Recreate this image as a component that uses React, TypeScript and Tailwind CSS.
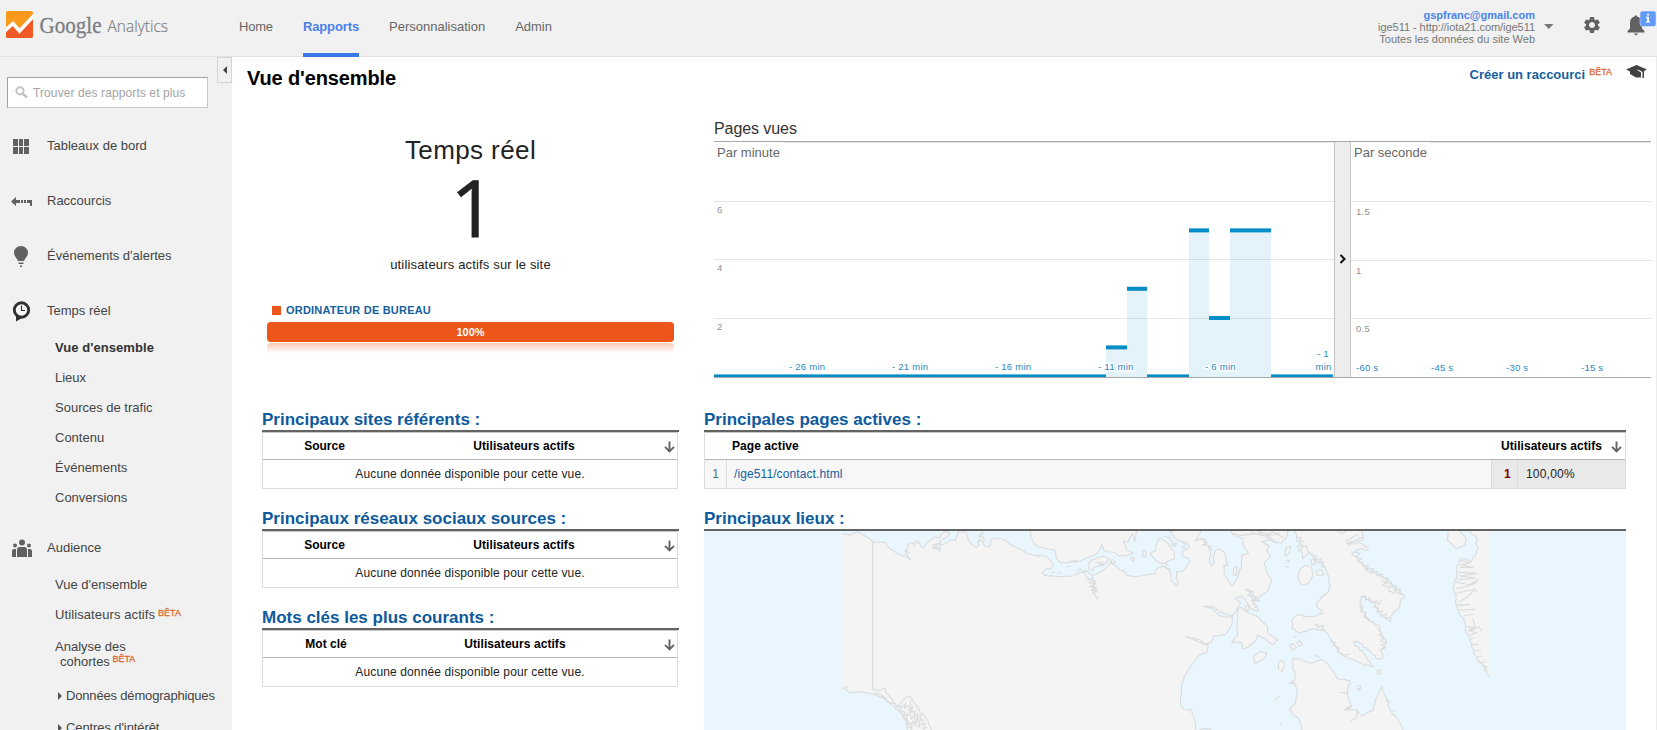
import { MdSettings } from "react-icons/md";
import type { ReactNode } from "react";

/* ---------- Header ---------- */

function Logo() {
  return (
    <svg width="180" height="56" viewBox="0 0 180 56" className="shrink-0">
      <defs>
        <clipPath id="logo-tile">
          <rect x="6" y="11" width="27" height="27" rx="2" />
        </clipPath>
        <linearGradient id="logo-top" x1="0" y1="0" x2="0" y2="1">
          <stop offset="0" stopColor="#f8981d" />
          <stop offset="1" stopColor="#f9a01f" />
        </linearGradient>
      </defs>
      <g clipPath="url(#logo-tile)">
        <rect x="6" y="11" width="27" height="27" fill="url(#logo-top)" />
        <path d="M6 29 13 22.5 19.5 29.5 34 13V38H6Z" fill="#f15a24" />
        <path d="M4 31.5 13 23.5 19.5 31 35 14.5" fill="none" stroke="#fff" strokeWidth="3.6" />
      </g>
      <text x="39.500" y="32.500" textLength="62" lengthAdjust="spacingAndGlyphs" fill="#7b7e82" stroke="#7b7e82" strokeWidth="0.3" fontSize="23.500" fontFamily="'Liberation Serif', serif">
        Google
      </text>
      <text x="107.500" y="32.200" textLength="60.500" lengthAdjust="spacingAndGlyphs" fill="#7d8084" stroke="#7d8084" strokeWidth="0.2" fontSize="17" fontWeight="300" fontFamily="'Open Sans', sans-serif">
        Analytics
      </text>
    </svg>
  );
}

function Header() {
  return (
    <header className="flex h-[57px] shrink-0 border-b border-[#e2e2e2] bg-[#f1f1f1] text-[13px]">
      <Logo />
      <nav className="ml-[59px] flex gap-[30px] text-[#666]">
        <a className="h-[57px] leading-[54px] tracking-[-0.2px]">Home</a>
        <a className="h-[57px] border-b-4 border-[#3b78e7] font-bold leading-[54px] tracking-[-0.12px] text-[#4a80ea]">Rapports</a>
        <a className="h-[57px] leading-[54px]">Personnalisation</a>
        <a className="h-[57px] leading-[54px]">Admin</a>
      </nav>
      <div className="ml-auto flex">
        <div className="pt-[9px] text-right text-[11px] leading-[12px] text-[#777]">
          <div className="font-bold text-[#4a84e8]">gspfranc@gmail.com</div>
          <div className="tracking-[-0.05px]">ige511 - http://iota21.com/ige511</div>
          <div>Toutes les données du site Web</div>
        </div>
        <svg width="10" height="6" viewBox="0 0 10 6" className="ml-[9px] mt-6">
          <path d="M0 0H9.500L4.750 5Z" fill="#777" />
        </svg>
        <MdSettings className="ml-[28px] mt-[15px] size-[20px] text-[#616161]" />
        <svg width="30" height="30" viewBox="0 0 30 30" className="ml-[25px] mt-[9px]">
          <path d="M0.500 23.500V22L3 19.500V13.500C3 10 5 8 7.500 7.500V7Q8.700 5.500 10 7V7.500C13 8 15 10 15 13.500V19.500L17.500 22V23.500ZM6.500 24.500H11.500L9 26.500Z" fill="#616161" />
          <rect x="13" y="2" width="16" height="15.500" rx="2.500" fill="#639bf8" stroke="#f1f1f1" strokeWidth="0.500" />
          <path d="M19 7.700H22V12.300H23V13.500H19V12.300H20V8.900H19ZM20 4.800H22V6.600H20Z" fill="#fff" />
        </svg>
      </div>
    </header>
  );
}

/* ---------- Sidebar ---------- */

const GridIcon = () => (
  <svg width="24" height="24" viewBox="0 0 24 24" fill="#616161">
    <path d="M4 4H9V11H4ZM10 4H14V11H10ZM15 4H20V11H15ZM4 12H9V19H4ZM10 12H14V19H10ZM15 12H20V19H15Z" />
  </svg>
);

const ShortcutIcon = () => (
  <svg width="24" height="24" viewBox="0 0 24 24" fill="#616161">
    <path d="M2 11.500 7 7V10H11V13H7V16ZM12 10H14V13H12ZM15 10H17V13H15ZM18 10H23V16H21V13H18Z" />
  </svg>
);

const BulbIcon = () => (
  <svg width="24" height="24" viewBox="0 0 24 24" fill="#616161">
    <path d="M12 1C16 1 19 4 19 7.700C19 11.500 16 13 15 16H9C8 13 5 11.500 5 7.700C5 4 8 1 12 1ZM9.500 17.500H14.500V19H9.500ZM11 20.500H13V22H11Z" />
  </svg>
);

const ClockIcon = () => (
  <svg width="24" height="24" viewBox="0 0 24 24">
    <circle cx="12.500" cy="10" r="7.200" fill="#f7f7f7" stroke="#303030" strokeWidth="2.900" />
    <path d="M7 15.500 7 21.500 13 18Z" fill="#303030" />
    <path d="M12.500 5.500V10.500H16" fill="none" stroke="#303030" strokeWidth="1.200" />
  </svg>
);

const PeopleIcon = () => (
  <svg width="24" height="24" viewBox="0 0 24 24" fill="#616161">
    <circle cx="13" cy="5.500" r="3" />
    <circle cx="6" cy="8.500" r="2" />
    <circle cx="20" cy="8.500" r="2" />
    <path d="M8 20V12.500Q8 10 10.500 10H15.500Q18 10 18 12.500V20ZM3 20V14Q3 12 5 12H7V20ZM19 20V12H21Q23 12 23 14V20Z" />
  </svg>
);

function NavItem({ icon, label, className = "" }: { icon: ReactNode; label: string; className?: string }) {
  return (
    <div className={`flex h-[55px] shrink-0 items-start pl-[9px] leading-[55px] ${className}`}>
      <span className="mt-[17px] w-[38px]">{icon}</span>
      {label}
    </div>
  );
}

const Beta = ({ className = "" }: { className?: string }) => (
  <span className={`relative text-[9px] leading-none text-[#dd6a2f] [-webkit-text-stroke:0.3px_#dd6a2f] ${className}`}>BÊTA</span>
);

function SubItem({ children, className = "" }: { children: ReactNode; className?: string }) {
  return <div className={`h-[30px] shrink-0 pl-[55px] leading-[30px] ${className}`}>{children}</div>;
}

const Caret = () => (
  <svg width="4" height="8" viewBox="0 0 4 8" className="mr-1">
    <path d="M0 0 4 4 0 8Z" fill="#555" />
  </svg>
);

function Sidebar() {
  return (
    <aside className="flex w-[232px] shrink-0 flex-col bg-[#f1f1f1] text-[13px] text-[#444]">
      <div className="flex h-[61px] shrink-0">
        <div className="ml-[7px] mt-5 flex h-[31px] w-[201px] items-center border border-[#c6c6c6] border-l-[#a0a0a0] border-t-[#a0a0a0] bg-white pl-[7px] text-[12px] tracking-[0.1px] text-[#a3a3a3]">
          <svg width="14" height="13" viewBox="0 0 14 13" className="mr-1">
            <circle cx="5" cy="4.800" r="3.600" fill="none" stroke="#c4c4c4" strokeWidth="2" />
            <path d="M7.500 7.500 12 11.500" stroke="#c4c4c4" strokeWidth="2.600" />
          </svg>
          Trouver des rapports et plus
        </div>
        <div className="ml-[9px] flex h-[26px] w-[15px] items-center justify-center border border-[#d5d5d5]">
          <svg width="4" height="8" viewBox="0 0 4 8">
            <path d="M4 0 0 4 4 8Z" fill="#444" />
          </svg>
        </div>
      </div>
      <NavItem icon={<GridIcon />} label="Tableaux de bord" />
      <NavItem icon={<ShortcutIcon />} label="Raccourcis" />
      <NavItem icon={<BulbIcon />} label="Événements d'alertes" />
      <NavItem icon={<ClockIcon />} label="Temps réel" className="mb-[-5px]" />
      <SubItem className="font-bold tracking-[0.07px] text-[#333]">Vue d'ensemble</SubItem>
      <SubItem>Lieux</SubItem>
      <SubItem>Sources de trafic</SubItem>
      <SubItem>Contenu</SubItem>
      <SubItem>Événements</SubItem>
      <SubItem>Conversions</SubItem>
      <NavItem icon={<PeopleIcon />} label="Audience" className="mb-[-5px] mt-[7px]" />
      <SubItem>Vue d'ensemble</SubItem>
      <SubItem className="tracking-[0.1px]">
        Utilisateurs actifs <Beta className="-left-px -top-[3px]" />
      </SubItem>
      <div className="h-[50px] shrink-0 pl-[55px] pt-[9px] leading-[15px]">
        <div>Analyse des</div>
        <div className="pl-[5px]">
          cohortes <Beta className="-left-px -top-[4px]" />
        </div>
      </div>
      <div className="flex h-8 shrink-0 items-center pl-[58px] tracking-[-0.17px]">
        <Caret />
        Données démographiques
      </div>
      <div className="flex h-8 shrink-0 items-center pl-[58px] tracking-[-0.1px]">
        <Caret />
        Centres d'intérêt
      </div>
    </aside>
  );
}

/* ---------- Real-time counter ---------- */

function Counter() {
  return (
    <section className="flex w-[407px] shrink-0 flex-col text-center text-[#222]">
      <h2 className="mt-[26px] h-[30px] text-[26px] leading-[30px] tracking-[0.4px]">Temps réel</h2>
      <div className="mt-[5px] h-[74px] pl-[5px] font-['Open_Sans',sans-serif] text-[79px] leading-[74px] [-webkit-text-stroke:0.8px_#222]">1</div>
      <div className="mt-[13px] h-4 text-[13px] leading-4 tracking-[0.17px]">utilisateurs actifs sur le site</div>
      <div className="mt-[29px] flex h-4 items-center gap-[5px] pl-[5px] text-[11px] font-bold tracking-[0.2px] text-[#15609e]">
        <span className="size-[9px] bg-[#ed561b]" />
        ORDINATEUR DE BUREAU
      </div>
      <div className="mt-1 h-5 shrink-0 rounded-[4px] bg-[#ed561b] text-[11px] font-bold leading-[21px] text-white">100%</div>
      <div className="mt-px h-[10px] rounded-t-[4px] bg-linear-to-b from-[#f9c9b4] to-white" />
    </section>
  );
}

/* ---------- Chart ---------- */

const bars = [
  { x: 392, w: 21, y: 204.400 },
  { x: 413, w: 20, y: 145.800 },
  { x: 475, w: 20, y: 87.400 },
  { x: 495, w: 21, y: 175 },
  { x: 516, w: 41, y: 87.400 },
];
const idle = [
  [0, 392],
  [433, 475],
  [557, 619],
];
const minuteLabels: [number, number, string][] = [
  [75, 229, "- 26 min"],
  [178, 229, "- 21 min"],
  [281, 229, "- 16 min"],
  [384, 229, "- 11 min"],
  [491, 229, "- 6 min"],
  [603, 216, "- 1"],
  [601.500, 229, "min"],
];
const secondLabels: [number, string][] = [
  [642, "-60 s"],
  [717, "-45 s"],
  [792, "-30 s"],
  [867, "-15 s"],
];

function PageViews() {
  return (
    <section className="w-[937px] shrink-0">
      <h3 className="mt-[9px] h-[22px] text-[16px] leading-[22px] tracking-[-0.08px] text-[#333]">Pages vues</h3>
      <svg width="937" height="238" viewBox="0 0 937 238" className="mt-px block" fontFamily="'Liberation Sans', sans-serif" fontSize="9.500" letterSpacing="0.25">
        <path d="M0 .5H937M0 236.500H937" stroke="#a8a8a8" />
        <path d="M69 1.500H620M716 1.500H937M0 60.500H620M0 118.500H620M0 177.500H620M637 60.500H937M637 119.500H937M637 177.500H937" stroke="#e5e5e5" />
        {bars.map((b) => (
          <g key={b.x}>
            <rect x={b.x} y={b.y} width={b.w} height={236 - b.y} fill="#058dc7" fillOpacity="0.11" />
            <rect x={b.x} y={b.y} width={b.w} height="4" fill="#058dc7" />
          </g>
        ))}
        {idle.map(([a, b]) => (
          <rect key={a} x={a} y="233.400" width={b - a} height="2.600" fill="#058dc7" />
        ))}
        <rect x="620" y="1" width="17" height="235" fill="#ededed" />
        <path d="M620.500 1V236M636.500 1V236" stroke="#c4c4c4" />
        <path d="M626.500 114 630.500 118 626.500 122" fill="none" stroke="#111" strokeWidth="2" />
        <g fontSize="13" letterSpacing="0" fill="#666">
          <text x="3" y="16">Par minute</text>
          <text x="640" y="16">Par seconde</text>
        </g>
        <g fill="#8f8f8f">
          <text x="3" y="72">6</text>
          <text x="3" y="130">4</text>
          <text x="3" y="189">2</text>
          <text x="642" y="74">1.5</text>
          <text x="642" y="133">1</text>
          <text x="642" y="191">0.5</text>
        </g>
        <g fill="#2a88c0" stroke="#fff" strokeWidth="3" strokeOpacity="0.8" paintOrder="stroke">
          {minuteLabels.map(([x, y, t]) => (
            <text key={`${x}`} x={x} y={y}>{t}</text>
          ))}
          {secondLabels.map(([x, t]) => (
            <text key={t} x={x} y="230">{t}</text>
          ))}
        </g>
      </svg>
    </section>
  );
}

/* ---------- Tables ---------- */

const SortArrow = () => (
  <svg width="11" height="12" viewBox="0 0 11 12">
    <path d="M5.500 0.500V10M1 5.800 5.500 10.300 10 5.800" fill="none" stroke="#636363" strokeWidth="1.900" />
  </svg>
);

function Heading({ children }: { children: ReactNode }) {
  return <h3 className="h-[23px] border-b-2 border-[#636363] text-[17px] font-bold leading-[21px] text-[#0d5a9c]">{children}</h3>;
}

function EmptyTable({ title, column, cells }: { title: string; column: string; cells: string }) {
  return (
    <section className="h-[99px] w-[417px] shrink-0">
      <Heading>{title}</Heading>
      <div className="h-[57px] w-[416px] border border-[#dcdcdc] border-t-[#c8c8c8] text-[12px] text-[#222]">
        <div className={`grid h-[27px] border-b border-[#b4b4b4] text-center font-bold leading-[27px] text-black ${cells}`}>
          <span>{column}</span>
          <span className="tracking-[0.07px]">Utilisateurs actifs</span>
          <span className="flex justify-end pr-[2px] pt-[8px]">
            <SortArrow />
          </span>
        </div>
        <div className="text-center leading-[28px] tracking-[0.13px]">Aucune donnée disponible pour cette vue.</div>
      </div>
    </section>
  );
}

function ActivePages() {
  return (
    <section className="h-[99px]">
      <Heading>Principales pages actives :</Heading>
      <div className="h-[57px] border border-[#dcdcdc] border-t-[#c8c8c8] text-[12px]">
        <div className="flex h-[27px] justify-between border-b border-[#b4b4b4] pl-[27px] pr-[3px] font-bold leading-[27px] text-black">
          <span className="tracking-[0.07px]">Page active</span>
          <span className="flex gap-[9px] tracking-[0.05px]">
            Utilisateurs actifs
            <span className="pt-[8px]">
              <SortArrow />
            </span>
          </span>
        </div>
        <div className="flex h-[28px] bg-[#f7f7f7] leading-[28px]">
          <span className="w-[22px] border-r border-[#dcdcdc] text-center text-[#5a6b7c]">1</span>
          <span className="flex-1 pl-[7px] tracking-[0.1px] text-[#15609e]">/ige511/contact.html</span>
          <span className="w-[27px] border-l border-r border-[#dcdcdc] bg-[#e9e9e9] pl-[12px] font-bold text-[#800000]">1</span>
          <span className="w-[107px] bg-[#e9e9e9] pl-[8px] tracking-[0.2px] text-[#222]">100,00%</span>
        </div>
      </div>
    </section>
  );
}

/* ---------- Map ---------- */

/* Breaks each coast segment into short steps pushed alternately off the line. */
function coast(points: string, amp: number, dx = 0): string {
  const n = points.trim().split(/\s+/).map(Number);
  const pts: [number, number][] = [];
  for (let i = 0; i < n.length; i += 2) pts.push([n[i] + dx, n[i + 1]]);
  let seed = 7;
  const rnd = () => {
    seed = (seed * 16807) % 2147483647;
    return seed / 2147483647 - 0.5;
  };
  const out: string[] = [];
  pts.forEach(([x, y], i) => {
    out.push(`${x} ${y}`);
    const [u, v] = pts[(i + 1) % pts.length];
    const len = Math.hypot(u - x, v - y);
    if (len > 130) return;
    const steps = Math.floor(len / 7);
    for (let k = 1; k < steps; k++) {
      const t = k / steps;
      const o = rnd() * 2 * amp;
      out.push(`${(x + (u - x) * t - ((v - y) / len) * o).toFixed(1)} ${(y + (v - y) * t + ((u - x) / len) * o).toFixed(1)}`);
    }
  });
  return `M${out.join("L")}Z`;
}

const E = 1410;
const seas = [
  coast(
    "440 50 440 74 456 72 476 75 490 70 500 66 512 69 525 78 538 86 548 95 580 97 588 98 590 106 598 114 612 124 630 134 645 138 662 150 656 140 645 124 650 118 655 110 655 102 665 98 672 102 680 92 685 100 690 96 692 110 700 112 712 96 722 92 735 80 748 84 755 72 765 64 778 66 776 76 765 84 752 92 748 100 730 104 728 114 745 116 750 124 748 110 770 98 785 88 795 92 800 80 805 66 825 64 832 78 835 90 848 104 860 112 868 104 862 98 870 88 868 76 878 66 876 80 884 90 878 100 885 108 900 108 904 88 920 84 945 90 965 106 985 114 1010 130 1045 140 1050 134 1065 138 1080 150 1090 166 1085 174 1070 176 1055 190 1075 198 1110 200 1150 198 1170 186 1185 190 1195 210 1205 208 1210 196 1240 182 1262 158 1280 170 1290 182 1300 182 1310 196 1330 200 1360 196 1395 192 1400 176 1420 168 1440 182 1445 215 1460 228 1465 220 1458 205 1460 185 1480 182 1500 155 1495 145 1480 140 1478 125 1498 112 1495 98 1475 95 1455 85 1440 66 1438 50",
    1.5,
  ),
  coast(
    "120 50 122 68 105 92 125 85 145 110 152 130 148 150 155 168 162 160 160 135 168 120 178 116 196 132 202 168 190 165 195 195 215 228 230 210 244 170 245 135 265 130 250 105 248 85 230 80 215 70 212 50",
    1.5,
    E,
  ),
  coast(
    "388 50 382 75 365 100 345 95 318 70 330 90 305 95 328 108 320 122 332 140 312 160 320 185 335 212 325 240 300 260 290 268 300 272 286 270 278 245 260 236 272 252 282 276 295 302 275 298 255 268 240 258 225 265 242 278 230 300 215 318 180 305 160 290 130 290 155 294 180 318 218 322 215 345 195 375 160 378 155 395 140 402 115 388 78 380 110 392 145 405 142 425 115 435 95 465 75 495 64 530 62 585 70 598 95 600 104 630 108 670 430 670 425 655 415 625 388 600 405 580 412 550 403 520 388 520 405 510 405 485 397 475 400 445 420 448 450 460 485 448 510 470 525 490 530 505 570 512 562 540 566 570 575 590 556 600 590 600 605 618 640 600 645 575 665 530 680 565 690 600 710 625 725 650 730 670 1500 670 1500 50",
    1.800,
    E,
  ),
  coast("440 535 456 535 470 530 468 540 480 548 515 545 550 552 575 562 600 580 635 610 650 640 655 670 440 670", 2),
];

const islands = [
  coast("1022 50 1022 80 1030 98 1045 110 1095 120 1100 145 1110 158 1160 156 1195 142 1222 130 1236 104 1242 122 1275 128 1285 138 1310 136 1330 130 1310 120 1300 92 1315 96 1318 84 1328 72 1334 94 1340 66 1330 50", 1.200),
  coast("1195 165 1205 150 1240 138 1258 146 1240 166 1212 172 1210 182 1196 176", 1.200),
  coast("1380 132 1395 124 1400 100 1410 82 1430 96 1452 126 1455 146 1430 156 1418 162 1396 150", 2),
  coast(
    "405 50 410 90 430 110 450 128 470 150 495 170 500 185 512 228 500 250 470 280 487 312 440 320 410 315 395 335 395 355 420 370 455 358 490 358 510 385 540 430 600 458 640 470 610 430 580 395 600 400 655 448 668 445 660 420 678 400 660 350 625 330 600 290 605 258 640 275 665 320 690 335 700 305 715 295 732 255 700 230 665 200 620 180 585 140 575 130 590 120 625 118 600 100 560 100 595 85 612 85 605 50",
    4,
    E,
  ),
  coast("232 300 245 292 262 308 290 318 322 348 325 372 354 390 336 404 310 384 292 376 284 394 265 412 248 418 244 398 215 398 232 376", 2, E),
  coast("418 180 435 166 455 172 458 198 445 220 425 226 413 205", 0.500, E),
  coast("280 440 300 424 320 430 312 446 285 460", 1, E),
  coast("355 460 366 450 374 462 366 484 355 476", 1, E),
  coast("388 404 400 402 410 414 398 420", 0.500, E),
  coast("410 398 418 392 428 404 418 408", 0.500, E),
  coast("592 530 600 526 603 534 594 542", 0.500, E),
  coast("220 178 227 168 232 182 228 196 220 194", 0.500, E),
  coast("374 132 380 112 394 110 386 130 378 138", 0.500, E),
  coast("412 108 420 104 424 118 416 124", 0.500, E),
  coast("425 112 438 108 446 128 428 146", 1, E),
  coast("468 182 486 180 492 194 470 196", 1, E),
  coast("452 150 462 146 468 158 456 166", 1, E),
  coast("650 482 660 478 664 490 656 494", 0.500, E),
  coast("256 288 264 286 268 300 260 304", 0.500, E),
  coast("866 50 862 90 890 116 915 104 918 84 900 66 895 50", 1, E),
  coast(
    "928 50 935 72 952 84 946 100 955 112 948 130 935 155 905 145 890 170 892 190 885 210 882 240 888 262 890 290 912 330 916 350 920 370 930 390 935 410 955 450 965 460 975 482 987 500 1010 500 1010 50",
    4,
    E,
  ),
  coast("1325 142 1334 146 1330 154 1322 148", 0.500),
  coast("1358 124 1368 122 1366 142 1358 140", 1),
  coast("1262 150 1272 150 1276 158 1266 160", 0.500),
];

const details = [
  "M548 95V537L565 542 585 535 588 548 605 566 622 590 640 570 648 562 660 558 670 575 682 590 690 605 704 616 714 634 726 665",
  "M550 548 575 555 590 566 574 560 600 578 612 580 624 592 636 588 630 602 644 606 640 618 652 612 650 628 640 624 656 636 648 642 664 640 654 650 668 654 658 662",
  "M640 590 648 580 644 596 656 586 658 600 668 590 664 608 676 602 672 618 684 610 680 626 696 612 690 632 700 628 694 644 706 640 700 656 712 652 M660 572 664 590 658 610 666 628 672 616 678 640 684 622 690 652 676 646 670 632 664 652",
  "M1194 205 1210 212 1196 218 1216 222 1198 230 1218 232 1204 240 1222 242 1210 248 1224 268M1204 208 1218 216 1208 226 1224 238M1212 208 1208 250",
  "M1085 188 1096 186M1102 190 1112 188M1130 170 1142 168M1162 182 1170 176 1180 186 1190 182M1142 154 1164 151M1186 180 1206 196M1215 160 1236 156 1226 168 1246 160",
  "M730 104 752 100 734 110 750 116M866 80 880 78M864 92 880 94M648 122 660 130M668 98 674 110",
];

const eastDetails = [
  "M30 66 44 62M10 78 30 84 40 104 50 98 46 110 34 106M60 90 78 104 66 112 82 118M4 158 24 162 14 170 32 180M116 90 132 86 142 98 126 104 150 108 158 124M215 70 240 76 300 70 330 88 350 100M270 66 310 78 340 66 372 84M288 62 330 76 360 70",
  "M255 240 276 246 262 256 290 262 274 272 298 272M276 280 292 288 280 296M378 150 388 152 382 160M376 170 388 172M346 572 360 556M362 640 364 648M400 380 408 381M466 436 478 441",
  "M456 130 470 140 462 150 484 146 478 158 492 156 484 170 498 174M410 84 424 82 418 94 434 96",
  "M555 95 580 80 596 72M565 104 590 90 610 92M530 62 545 70 560 62M578 126 600 130 588 140 606 146 592 152 612 160M606 168 626 166 618 178 640 176 632 190 652 184 650 198 664 190 672 206 684 204 678 220 694 216 690 232 708 226 704 244 722 236 716 252 730 252",
  "M604 262 618 258 616 270 630 264 634 280 650 272 654 286 666 270M640 290 656 296 650 306 668 302 662 318 680 312 676 326 690 322M684 240 700 250 716 246M664 212 680 216 668 224 690 234",
  "M598 288 610 292 602 304 618 310 612 322 630 330M650 352 664 368 656 374 672 384 662 392 680 398 664 404 676 414 660 420M462 346 474 342 472 352 490 346 484 360 496 358M510 392 526 398 520 406 538 414 532 426 552 436 570 432",
  "M900 150 930 158 905 164 940 172 900 172M892 186 950 190 898 198 946 204 892 210M886 216 930 224 956 208M888 236 926 228 950 216M890 250 940 238 952 246M896 276 922 262 946 236M890 286 930 284M898 300 944 298M912 318 940 312M938 326 946 350 930 362 956 350 966 364M918 350 940 352 926 362 950 368 930 376M928 388 944 384M934 404 954 404M946 424 962 420M952 440 966 438M962 456 976 456M966 466 982 470 972 478 986 484",
  "M538 546 564 550M572 634 590 622 592 600M552 600 576 586M388 518 404 520M680 568 692 578M694 600 708 604M118 660 132 655 154 658",
];

function PlacesMap() {
  return (
    <svg width="922" height="199" viewBox="42 63 2766 597" className="block bg-[#e9f6fe]" preserveAspectRatio="none">
      <defs>
        <clipPath id="map-extent">
          <rect x="456" y="63" width="1941" height="597" />
        </clipPath>
      </defs>
      <g clipPath="url(#map-extent)" stroke="#d9dbdc" strokeWidth="3.300" strokeLinejoin="round">
        <rect x="456" y="50" width="1941" height="640" fill="#f4f4f4" stroke="none" />
        {seas.map((d, i) => (
          <path key={i} d={d} fill="#e9f6fe" />
        ))}
        {islands.map((d, i) => (
          <path key={i} d={d} fill="#f4f4f4" />
        ))}
        {details.map((d, i) => (
          <path key={i} d={d} fill="none" />
        ))}
        <g transform="translate(1410 0)">
          {eastDetails.map((d, i) => (
            <path key={i} d={d} fill="none" />
          ))}
        </g>
      </g>
    </svg>
  );
}

/* ---------- Page ---------- */

export default function App() {
  return (
    <div className="flex h-[730px] w-[1657px] flex-col overflow-hidden bg-white font-['Liberation_Sans',Arial,sans-serif]">
      <Header />
      <div className="flex min-h-0 flex-1">
        <Sidebar />
        <main className="flex min-w-0 flex-1 flex-col border-r border-[#ebebeb]">
          <div className="flex h-[52px] shrink-0 justify-between pl-[15px] pr-[9px]">
            <h1 className="mt-[9px] text-[20px] font-bold leading-6 tracking-[-0.13px] text-black">Vue d'ensemble</h1>
            <div className="flex text-[13px] font-bold text-[#15609e]">
              <span className="mt-[10px] leading-4">Créer un raccourci</span>
              <span className="ml-1 mt-[9px] text-[9px] font-normal">
                <Beta />
              </span>
              <svg width="21" height="15" viewBox="0 0 21 15" className="ml-[14px] mt-2">
                <path d="M0 4.500 10.500 0 21 4.500 18 6V13H16.500V7L13 5 10.500 4.500 15 7.500V12.500H10L4 9V6.500Z" fill="#424242" />
              </svg>
            </div>
          </div>
          <div className="flex h-[300px] shrink-0 pl-[35px]">
            <Counter />
            <div className="w-[40px] shrink-0" />
            <PageViews />
          </div>
          <div className="flex min-h-0 flex-1 gap-[25px] pl-[30px]">
            <div className="flex flex-col">
              <EmptyTable title="Principaux sites référents :" column="Source" cells="grid-cols-[123px_276px_15px]" />
              <EmptyTable title="Principaux réseaux sociaux sources :" column="Source" cells="grid-cols-[123px_276px_15px]" />
              <EmptyTable title="Mots clés les plus courants :" column="Mot clé" cells="grid-cols-[126px_252px_36px]" />
            </div>
            <div className="w-[922px] shrink-0">
              <ActivePages />
              <Heading>Principaux lieux :</Heading>
              <PlacesMap />
            </div>
          </div>
        </main>
      </div>
    </div>
  );
}
